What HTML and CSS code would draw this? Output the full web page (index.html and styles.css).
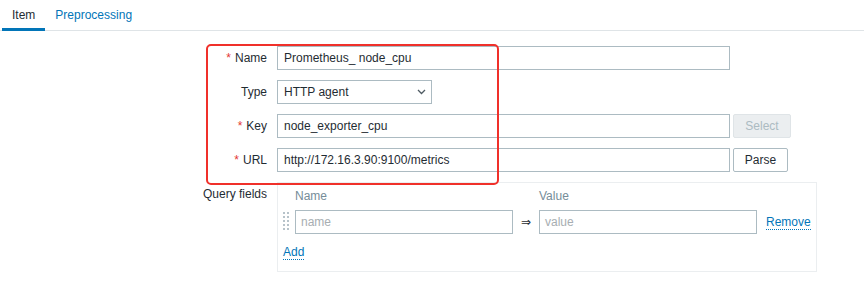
FILE: index.html
```html
<!DOCTYPE html>
<html lang="en">
<head>
    <meta charset="UTF-8">
    <title>Item</title>
    <link rel="stylesheet" href="styles.css">
</head>
<body>
    <div class="tabs">
        <a class="tab active">Item</a>
        <a class="tab">Preprocessing</a>
    </div>

    <div class="page">
        <div class="form">
            <label class="label"><span class="req">*</span>Name</label>
            <div class="control">
                <div class="input wide">Prometheus_ node_cpu</div>
            </div>

            <label class="label">Type</label>
            <div class="control">
                <div class="input select">
                    <span>HTTP agent</span>
                    <svg width="9" height="6" viewBox="0 0 9 6"><polyline points="1,1 4.5,4.5 8,1" fill="none" stroke="#4f5b63" stroke-width="1.3"/></svg>
                </div>
            </div>

            <label class="label"><span class="req">*</span>Key</label>
            <div class="control">
                <div class="input wide">node_exporter_cpu</div>
                <button class="btn" disabled>Select</button>
            </div>

            <label class="label"><span class="req">*</span>URL</label>
            <div class="control">
                <div class="input wide">http://172.16.3.90:9100/metrics</div>
                <button class="btn parse">Parse</button>
            </div>

            <label class="label top">Query fields</label>
            <div class="query-box">
                <div class="qgrid">
                    <span></span>
                    <span class="head">Name</span>
                    <span></span>
                    <span class="head">Value</span>
                    <span></span>

                    <span class="drag"></span>
                    <div class="input small placeholder">name</div>
                    <span class="arrow">&rArr;</span>
                    <div class="input small placeholder">value</div>
                    <a class="link">Remove</a>
                </div>
                <a class="link add">Add</a>
            </div>
        </div>

        <!-- annotation drawn over the screenshot -->
        <div class="highlight"></div>
    </div>
</body>
</html>
```

FILE: styles.css
```css
* {
    margin: 0;
    padding: 0;
    box-sizing: border-box;
}

body {
    background: #ffffff;
    color: #1f2c33;
    font-family: "Liberation Sans", Arial, sans-serif;
    font-size: 12px;
    line-height: 14px;
}

.tabs {
    display: flex;
    height: 31px;
    padding-left: 2px;
    border-bottom: 1px solid #dfe4e7;
}

.tab {
    padding: 8px 10px 6px;
    border-bottom: 3px solid transparent;
    color: #0275b8;
    height: 31px;
}

.tab.active {
    color: #1f2c33;
    border-bottom-color: #0275b8;
}

.page {
    position: relative;
}

.form {
    display: grid;
    grid-template-columns: 267px auto;
    column-gap: 10px;
    row-gap: 10px;
    padding-top: 15px;
}

.label {
    text-align: right;
    line-height: 24px;
    height: 24px;
}

.label.top {
    line-height: 14px;
    padding-top: 5px;
}

.req {
    color: #e33734;
    margin-right: 4px;
}

.control {
    display: flex;
    gap: 3px;
}

.input {
    height: 24px;
    line-height: 22px;
    border: 1px solid #acbbc2;
    background: #ffffff;
    padding: 0 6px;
    white-space: nowrap;
}

.wide {
    width: 453px;
}

.select {
    width: 155px;
    display: flex;
    align-items: center;
    justify-content: space-between;
    padding-right: 5px;
}

.btn {
    height: 24px;
    padding: 0 10px;
    font-family: inherit;
    font-size: 12px;
    color: #1f2c33;
    background: #ffffff;
    border: 1px solid #acbbc2;
    border-radius: 2px;
}

.btn:disabled {
    width: 58px;
    color: #acbbc2;
    background: #ebeef0;
    border-color: #dfe4e7;
}

.btn.parse {
    width: 55px;
}

.query-box {
    width: 540px;
    height: 90px;
    border: 1px solid #ebeef0;
    padding: 6px 5px 0;
}

.qgrid {
    display: grid;
    grid-template-columns: 6px 218px 14px 218px auto;
    column-gap: 6px;
    row-gap: 7px;
    align-items: center;
}

.qgrid > .arrow {
    text-align: center;
    font-family: "DejaVu Sans", sans-serif;
    font-size: 12px;
    color: #1f2c33;
}

.qgrid > .link {
    margin-left: 3px;
    justify-self: start;
}

.head {
    color: #768d99;
}

.drag {
    width: 6px;
    height: 20px;
    background-image: radial-gradient(circle at 1px 1px, #b7c3ca 1px, transparent 1.3px);
    background-size: 4px 4px;
}

.small {
    width: 218px;
    padding: 0 5px;
}

.placeholder {
    color: #a7aeb2;
}

.link {
    color: #0275b8;
    border-bottom: 1px dotted #0275b8;
    line-height: 14px;
}

.add {
    display: inline-block;
    margin-top: 11px;
}

.highlight {
    position: absolute;
    left: 206px;
    top: 13px;
    width: 293px;
    height: 141px;
    border: 2px solid #f0302a;
    border-radius: 5px;
}
```
